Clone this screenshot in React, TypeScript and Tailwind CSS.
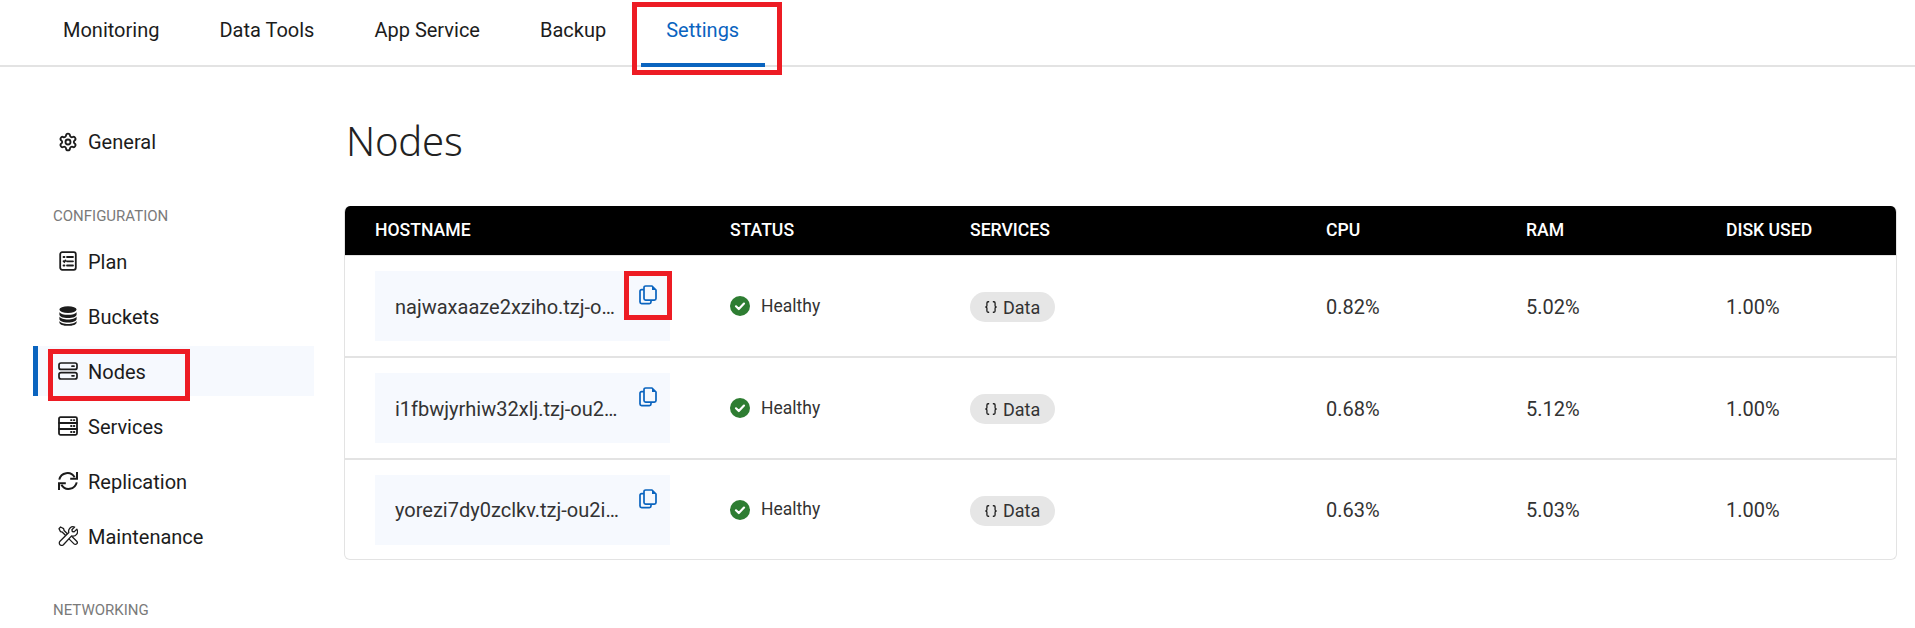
import React from "react";
import { Braces, Settings as Gear } from "lucide-react";

const PlanIcon = () => (
  <svg width="18" height="20" viewBox="0 0 18 20" fill="none" stroke="#1c1c1c" strokeWidth="1.8" strokeLinecap="round">
    <rect x="1.2" y="1.2" width="15.6" height="17.6" rx="2" />
    <path d="M4.5 6h1M8 6h6M4.5 10.2l.8.8 1.2-1.6M8 10.3h6M4.5 14.5h1M8 14.5h6" />
  </svg>
);
const BucketIcon = () => (
  <svg width="18" height="20" viewBox="0 0 18 20" fill="#1c1c1c">
    <ellipse cx="9" cy="3.6" rx="8.6" ry="3.4" />
    <path d="M.4 5.9C1.4 8 5 8.8 9 8.8s7.6-.8 8.6-2.9v2.5C17.6 10.6 13.8 12 9 12S.4 10.6.4 8.4z" />
    <path d="M.4 10.6C1.4 12.7 5 13.6 9 13.6s7.6-.9 8.6-3v2.3c0 2.1-3.8 3.5-8.6 3.5S.4 15 .4 12.9z" />
    <path d="M.4 15c1 2.1 4.6 3 8.6 3s7.6-.9 8.6-3v1.4c0 2-3.8 3.4-8.6 3.4S.4 18.4.4 16.4z" />
  </svg>
);
const NodesIcon = () => (
  <svg width="20" height="18" viewBox="0 0 20 18" fill="none" stroke="#1c1c1c" strokeWidth="1.7" strokeLinecap="round">
    <rect x="1" y="1" width="18" height="6.4" rx="2" />
    <rect x="1" y="10.6" width="18" height="6.4" rx="2" />
    <path d="M14 4.2h2M14 13.8h2" />
  </svg>
);
const ServicesIcon = () => (
  <svg width="20" height="20" viewBox="0 0 20 20" fill="none" stroke="#1c1c1c" strokeWidth="1.8" strokeLinecap="round">
    <rect x="1" y="1.2" width="18" height="17.6" rx="1.5" />
    <path d="M1 7h18M1 13h18M13 4.1h.6M15.8 4.1h.6M13 10h.6M15.8 10h.6M13 16h.6M15.8 16h.6" />
  </svg>
);
const ReplicationIcon = () => (
  <svg width="20" height="20" viewBox="0 0 20 20" fill="none" stroke="#1c1c1c" strokeWidth="2">
    <path d="M1.3 8.6A8.3 8.3 0 0 1 16.6 6.2" />
    <path d="M19 1v6.8h-6.8" strokeLinejoin="miter" />
    <path d="M18.7 11.4A8.3 8.3 0 0 1 3.4 13.8" />
    <path d="M1 19v-6.8h6.8" strokeLinejoin="miter" />
  </svg>
);
const MaintenanceIcon = () => (
  <svg width="20" height="20" viewBox="0 0 20 20" fill="none" stroke="#1c1c1c" strokeWidth="1.3" strokeLinejoin="round" strokeLinecap="round">
    <path d="M1 2.6L2.6 1l3 1.6.5 1.900 5 5-1.700 1.700-5-5-1.900-.5z" />
    <path d="M11.400 10.500l1.300-1.300 6 6a1.900 1.900 0 0 1-2.700 2.700l-6-6z" />
    <path d="M18.800 3.200l-2.700 2.700-1.800-.4-.4-1.800L16.600 1a4.500 4.500 0 0 0-5.800 5.500L2 15.300a2.400 2.400 0 1 0 3.400 3.400l8.200-8.800a4.500 4.500 0 0 0 5.200-6.700z" fill="#fff" />
  </svg>
);
const CopyIcon = () => (
  <svg width="18" height="20" viewBox="0 0 18 20" fill="none" stroke="#0a64bf" strokeWidth="1.7" strokeLinejoin="round">
    <path d="M5 2.6A1.6 1.6 0 0 1 6.6 1H13l4 4v8.6a1.6 1.6 0 0 1-1.6 1.6H6.6A1.6 1.6 0 0 1 5 13.6z" />
    <path d="M5 4.6H2.6A1.6 1.6 0 0 0 1 6.2v10.9a1.6 1.6 0 0 0 1.6 1.6h7.8a1.6 1.6 0 0 0 1.6-1.6v-1.9" />
    <path d="M13 1v4h4" fill="#0a64bf" stroke="none" />
  </svg>
);
const HealthyIcon = () => (
  <svg width="20" height="20" viewBox="0 0 20 20">
    <circle cx="10" cy="10" r="10" fill="#2e7d32" />
    <path d="M6 10.3l2.8 2.7L14 7.6" fill="none" stroke="#fff" strokeWidth="2.2" strokeLinecap="round" strokeLinejoin="round" />
  </svg>
);

const tabs = ["Monitoring", "Data Tools", "App Service", "Backup"];

const nav = [
  { label: "Plan", icon: <PlanIcon /> },
  { label: "Buckets", icon: <BucketIcon /> },
  { label: "Nodes", icon: <NodesIcon />, active: true },
  { label: "Services", icon: <ServicesIcon /> },
  { label: "Replication", icon: <ReplicationIcon /> },
  { label: "Maintenance", icon: <MaintenanceIcon /> },
];

const rows = [
  { host: "najwaxaaze2xziho.tzj-ou2ip.cloud.couchbase.com", cpu: "0.82%", ram: "5.02%", disk: "1.00%", h: "h-[101px]", marked: true },
  { host: "i1fbwjyrhiw32xlj.tzj-ou2ip.cloud.couchbase.com", cpu: "0.68%", ram: "5.12%", disk: "1.00%", h: "h-[102px]" },
  { host: "yorezi7dy0zclkv.tzj-ou2ip.cloud.couchbase.com", cpu: "0.63%", ram: "5.03%", disk: "1.00%", h: "h-[101px]" },
];

const columns = "grid grid-cols-[30px_355px_240px_356px_200px_200px_1fr]";

export default function App() {
  return (
    <div className="h-[628px] overflow-hidden bg-white font-['Roboto',sans-serif] text-[#1c1c1c]">
      <header className="flex h-[67px] border-b-2 border-[#e3e3e3] pl-[63px] text-[20px] leading-[60px]">
        {tabs.map((t) => (
          <div key={t} className="mr-[60px]">{t}</div>
        ))}
        <div className="relative text-[#0a64bf]">
          Settings
          <div className="absolute -left-[25px] -right-[26px] top-[63px] h-[4px] bg-[#0a64bf]" />
          <div className="absolute -left-[34px] -right-[43px] top-[2px] h-[73px] border-[5px] border-[#ed1c24]" />
        </div>
      </header>

      <div className="flex">
        <aside className="w-[344px] shrink-0 pt-[50px] text-[20px]">
          <div className="flex h-[50px] items-center gap-[10px] pl-[58px]">
            <Gear size={20} strokeWidth={2.2} color="#1c1c1c" />
            General
          </div>
          <div className="mt-[40px] mb-[11px] pl-[53px] text-[15px] leading-[18px] text-[#7a7a7a]">CONFIGURATION</div>
          <div className="flex flex-col gap-[5px]">
            {nav.map((n) => (
              <div
                key={n.label}
                className={
                  n.active
                    ? "relative ml-[33px] flex h-[50px] w-[281px] items-center gap-[10px] border-l-[5px] border-[#0a64bf] bg-[#f6f9fe] pl-[20px]"
                    : "ml-[58px] flex h-[50px] items-center gap-[10px]"
                }
              >
                <span className="flex w-[20px] justify-center">{n.icon}</span>
                <span className="pt-[1px]">{n.label}</span>
                {n.active && <div className="absolute -left-[5px] top-[3px] ml-[15px] h-[52px] w-[142px] border-[5px] border-[#ed1c24]" />}
              </div>
            ))}
          </div>
          <div className="mt-[40px] pl-[53px] text-[15px] leading-[18px] text-[#7a7a7a]">NETWORKING</div>
        </aside>

        <main className="min-w-0 flex-1 pr-[18px]">
          <h1 className="mt-[42px] mb-[33px] pl-[2px] font-['Noto_Sans',sans-serif] text-[40px] leading-[64px] font-light tracking-[-0.2px] text-[#222]">Nodes</h1>
          <div className="overflow-hidden rounded-[6px] border border-[#e3e3e3] border-t-0">
            <div className={`${columns} h-[49px] items-center bg-black text-[17.6px] font-medium text-white`}>
              <span />
              <span>HOSTNAME</span>
              <span>STATUS</span>
              <span>SERVICES</span>
              <span>CPU</span>
              <span>RAM</span>
              <span>DISK USED</span>
            </div>
            {rows.map((r, i) => (
              <div key={r.host} className={`${columns} ${r.h} items-center text-[20px] text-[#333] ${i > 0 ? "border-t-2 border-[#e3e3e3]" : "border-t border-[#e3e3e3]"}`}>
                <span />
                <div className="relative mr-[60px] flex h-[70px] items-center bg-[#f6f9fe] pl-[20px] pr-[48px]">
                  <span className="truncate pt-[1px]">{r.host}</span>
                  <span className="absolute right-[13px] top-[14px]"><CopyIcon /></span>
                  {r.marked && <div className="absolute right-[-2px] top-[0px] h-[49px] w-[48px] border-[5px] border-[#ed1c24]" />}
                </div>
                <div className="flex items-center gap-[11px]">
                  <HealthyIcon />
                  <span className="text-[17.5px]">Healthy</span>
                </div>
                <div>
                  <span className="mt-[2px] inline-flex h-[30px] items-center gap-[5px] rounded-full bg-[#e6e6e6] px-[14px] text-[18px]">
                    <Braces size={14} strokeWidth={2.2} color="#1c1c1c" />
                    <span className="pr-[1px]">Data</span>
                  </span>
                </div>
                <span className="pt-[1px]">{r.cpu}</span>
                <span className="pt-[1px]">{r.ram}</span>
                <span className="pt-[1px]">{r.disk}</span>
              </div>
            ))}
          </div>
        </main>
      </div>
    </div>
  );
}
